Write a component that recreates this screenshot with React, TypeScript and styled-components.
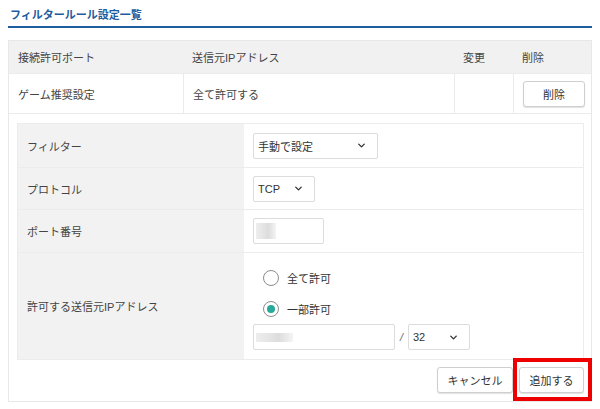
import styled, { createGlobalStyle } from 'styled-components'
import { ChevronDown } from 'lucide-react'

const GlobalStyle = createGlobalStyle`
  html, body {
    margin: 0;
    padding: 0;
    background: #fff;
  }
  body {
    font-family: "Liberation Sans", "Noto Sans CJK JP", sans-serif;
    font-size: 11px;
    color: #333;
  }
  * { box-sizing: border-box; }
`

const Page = styled.div`
  width: 600px;
  padding: 0 8px;
`

const Heading = styled.h2`
  margin: 0;
  height: 28px;
  padding: 8px 0 0 2px;
  font-size: 11px;
  font-weight: bold;
  line-height: 14px;
  color: #1f5d9e;
  border-bottom: 2px solid #1f5d9e;
`

const Table = styled.div`
  margin-top: 12px;
  border: 1px solid #e8e8e8;
  border-bottom: none;
`

const Row = styled.div<{ $head?: boolean; $height: number }>`
  display: grid;
  grid-template-columns: 174px 271px 59px 1fr;
  height: ${({ $height }) => $height}px;
  background: ${({ $head }) => ($head ? '#f1f1f1' : '#fff')};
  border-bottom: 1px solid #ebebeb;
`

const Cell = styled.div<{ $divider?: boolean }>`
  display: flex;
  align-items: center;
  padding-left: 9px;
  color: #444;
  border-left: ${({ $divider }) => ($divider ? '1px solid #ebebeb' : 'none')};
`

const Button = styled.button<{ $width: number }>`
  height: 26px;
  width: ${({ $width }) => $width}px;
  padding: 0;
  font-family: inherit;
  font-size: 11px;
  color: #333;
  background: #fff;
  border: 1px solid #cfcfcf;
  border-radius: 3px;
  box-shadow: 0 1px 1px rgba(0, 0, 0, 0.12);
  cursor: pointer;
`

const Panel = styled.div`
  border-bottom: 1px solid #e8e8e8;
  padding: 9px 7px 0 8px;
`

const Form = styled.div`
  border: 1px solid #ececec;
`

const FormRow = styled.div<{ $height: number }>`
  display: grid;
  grid-template-columns: 226px 1fr;
  min-height: ${({ $height }) => $height}px;
  border-top: 1px solid #ececec;
  &:first-child { border-top: none; }
`

const Label = styled.div`
  display: flex;
  align-items: center;
  padding-left: 9px;
  background: #f2f2f2;
  color: #444;
`

const Value = styled.div`
  display: flex;
  align-items: center;
  justify-content: flex-start;
  padding: 0 9px;
`

const ValueStack = styled.div`
  display: flex;
  flex-direction: column;
  justify-content: center;
  padding: 9px;
`

const Select = styled.div<{ $width: number }>`
  display: flex;
  align-items: center;
  justify-content: space-between;
  width: ${({ $width }) => $width}px;
  height: 26px;
  padding: 0 10px 0 4px;
  border: 1px solid #dcdcdc;
  border-radius: 2px;
  background: #fff;
  color: #333;
  font-size: 11px;
`

const Input = styled.div<{ $width: number }>`
  display: flex;
  align-items: center;
  width: ${({ $width }) => $width}px;
  height: 26px;
  padding-left: 2px;
  border: 1px solid #dcdcdc;
  border-radius: 2px;
  background: #fff;
`

const Blur = styled.div<{ $w: number; $h: number }>`
  width: ${({ $w }) => $w}px;
  height: ${({ $h }) => $h}px;
  background: linear-gradient(90deg, #eeeeee 0%, #e2e2e2 45%, #dcdcdc 60%, #f4f4f4 100%);
`

const RadioRow = styled.label`
  display: flex;
  align-items: center;
  gap: 8px;
  height: 31px;
  padding-left: 10px;
  color: #333;
`

const RadioCircle = styled.span<{ $checked?: boolean }>`
  display: inline-flex;
  align-items: center;
  justify-content: center;
  width: 16px;
  height: 16px;
  border: 1px solid #8c8c8c;
  border-radius: 50%;
  background: #fff;

  &::after {
    content: '';
    width: 8px;
    height: 8px;
    border-radius: 50%;
    background: ${({ $checked }) => ($checked ? '#28a99a' : 'transparent')};
  }
`

const AddressLine = styled.div`
  display: flex;
  align-items: center;
  height: 26px;
`

const Slash = styled.span`
  width: 13px;
  text-align: center;
  color: #666;
  font-style: italic;
`

const Actions = styled.div`
  display: flex;
  justify-content: flex-end;
  gap: 6px;
  padding: 7px 0 8px;
`

const Highlight = styled.div`
  position: relative;

  &::after {
    content: '';
    position: absolute;
    left: -6px;
    top: -9px;
    right: -8px;
    bottom: -8px;
    border: 4px solid #ee0000;
    pointer-events: none;
  }
`

const Chevron = () => <ChevronDown size={11} strokeWidth={3} color="#333" />

const App = () => {
  return (
    <>
      <GlobalStyle />
      <Page>
        <Heading>フィルタールール設定一覧</Heading>
        <Table>
          <Row $head $height={33}>
            <Cell>接続許可ポート</Cell>
            <Cell>送信元IPアドレス</Cell>
            <Cell>変更</Cell>
            <Cell>削除</Cell>
          </Row>
          <Row $height={40}>
            <Cell>ゲーム推奨設定</Cell>
            <Cell $divider>全て許可する</Cell>
            <Cell $divider />
            <Cell $divider>
              <Button $width={62}>削除</Button>
            </Cell>
          </Row>
          <Panel>
            <Form>
              <FormRow $height={43}>
                <Label>フィルター</Label>
                <Value>
                  <Select $width={125}>
                    手動で設定
                    <Chevron />
                  </Select>
                </Value>
              </FormRow>
              <FormRow $height={42}>
                <Label>プロトコル</Label>
                <Value>
                  <Select $width={62}>
                    TCP
                    <Chevron />
                  </Select>
                </Value>
              </FormRow>
              <FormRow $height={43}>
                <Label>ポート番号</Label>
                <Value>
                  <Input $width={71}>
                    <Blur $w={20} $h={16} />
                  </Input>
                </Value>
              </FormRow>
              <FormRow $height={106}>
                <Label>許可する送信元IPアドレス</Label>
                <ValueStack>
                  <RadioRow>
                    <RadioCircle />
                    全て許可
                  </RadioRow>
                  <RadioRow>
                    <RadioCircle $checked />
                    一部許可
                  </RadioRow>
                  <AddressLine>
                    <Input $width={142}>
                      <Blur $w={37} $h={9} />
                    </Input>
                    <Slash>/</Slash>
                    <Select $width={62}>
                      32
                      <Chevron />
                    </Select>
                  </AddressLine>
                </ValueStack>
              </FormRow>
            </Form>
            <Actions>
              <Button $width={76}>キャンセル</Button>
              <Highlight>
                <Button $width={65}>追加する</Button>
              </Highlight>
            </Actions>
          </Panel>
        </Table>
      </Page>
    </>
  )
}

export default App
